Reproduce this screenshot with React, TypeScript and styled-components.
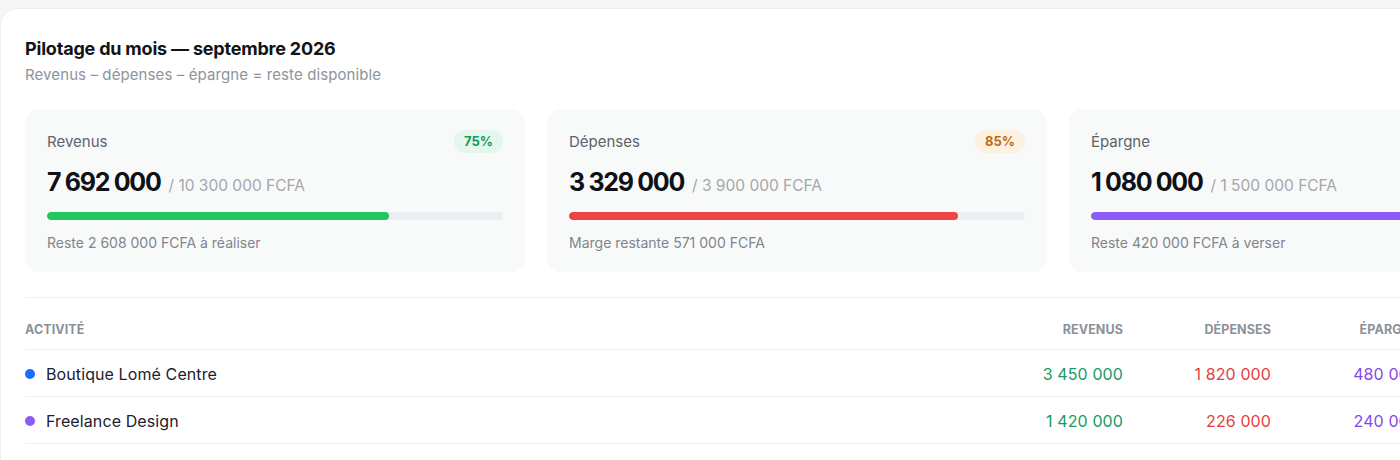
import React from "react";
import styled, { createGlobalStyle } from "styled-components";

const GlobalStyle = createGlobalStyle`
  html, body {
    margin: 0;
    padding: 0;
    background: #f5f7f7;
    overflow: hidden;
  }
  body {
    font-family: Inter, "Noto Sans", sans-serif;
    color: #111827;
    -webkit-font-smoothing: antialiased;
  }
`;

const Page = styled.div`
  padding-top: 8px;
  width: 1600px;
`;

const Panel = styled.section`
  width: 1594px;
  box-sizing: border-box;
  background: #ffffff;
  border: 1px solid #eceff0;
  border-radius: 16px;
  padding: 28px 24px 40px 24px;
`;

const Title = styled.h2`
  margin: 0;
  font-size: 18px;
  font-weight: 700;
  letter-spacing: -0.2px;
  line-height: 24px;
  color: #111318;
`;

const Subtitle = styled.p`
  margin: 4px 0 0 0;
  font-size: 15px;
  line-height: 20px;
  color: #8e939a;
  letter-spacing: 0.1px;
`;

const Cards = styled.div`
  display: grid;
  grid-template-columns: repeat(3, 1fr);
  gap: 22px;
  margin-top: 24px;
`;

const Card = styled.div`
  background: #f8fafa;
  border-radius: 14px;
  padding: 20px 22px 22px 22px;
  height: 163px;
  box-sizing: border-box;
`;

const CardHead = styled.div`
  display: flex;
  justify-content: space-between;
  align-items: center;
  height: 24px;
`;

const Label = styled.span`
  font-size: 15px;
  color: #5d626a;
  letter-spacing: 0;
`;

type Tone = "green" | "orange" | "purple";

const badgeColors: Record<Tone, { bg: string; fg: string }> = {
  green: { bg: "#e5f6ec", fg: "#17995a" },
  orange: { bg: "#fdf1e1", fg: "#c06a12" },
  purple: { bg: "#efe9fd", fg: "#7c4ddb" },
};

const Badge = styled.span<{ $tone: Tone }>`
  display: inline-flex;
  align-items: center;
  justify-content: center;
  height: 23px;
  padding: 0 10px;
  border-radius: 12px;
  font-size: 13px;
  font-weight: 700;
  background: ${(p) => badgeColors[p.$tone].bg};
  color: ${(p) => badgeColors[p.$tone].fg};
`;

const AmountRow = styled.div`
  display: flex;
  align-items: baseline;
  gap: 8px;
  margin-top: 14px;
  height: 34px;
`;

const Amount = styled.span`
  font-size: 25px;
  font-weight: 700;
  letter-spacing: -1.3px;
  color: #0f1115;
`;

const Target = styled.span`
  font-size: 15.5px;
  color: #a3a7ad;
  letter-spacing: 0;
`;

const Track = styled.div`
  margin-top: 11px;
  height: 8px;
  border-radius: 4px;
  background: #eceef2;
  overflow: hidden;
`;

const Fill = styled.div<{ $color: string }>`
  height: 100%;
  border-radius: 4px;
  background: ${(p) => p.$color};
`;

const Note = styled.div`
  margin-top: 14px;
  font-size: 14px;
  color: #80858c;
  letter-spacing: 0;
`;

const Divider = styled.hr`
  border: none;
  border-top: 1px solid #eef0f1;
  margin: 25px 0 0 0;
`;

const Table = styled.div`
  display: grid;
  grid-template-columns: 1fr repeat(3, 148px) 150px;
`;

const HeadCell = styled.div<{ $right?: boolean }>`
  height: 52px;
  box-sizing: border-box;
  padding-bottom: 12px;
  display: flex;
  align-items: flex-end;
  justify-content: ${(p) => (p.$right ? "flex-end" : "flex-start")};
  font-size: 12.5px;
  font-weight: 700;
  color: #8c9199;
  text-transform: uppercase;
  letter-spacing: 0.1px;
  border-bottom: 1px solid #eef0f1;
`;

const Cell = styled.div<{ $right?: boolean; $color?: string }>`
  height: 47px;
  box-sizing: border-box;
  padding-top: 1px;
  display: flex;
  align-items: center;
  justify-content: ${(p) => (p.$right ? "flex-end" : "flex-start")};
  font-size: 16px;
  color: ${(p) => p.$color ?? "#1b2130"};
  letter-spacing: 0.1px;
  border-bottom: 1px solid #eef0f1;
`;

const Dot = styled.span<{ $color: string }>`
  width: 10px;
  height: 10px;
  border-radius: 50%;
  background: ${(p) => p.$color};
  margin: 0 11px 0 0;
`;

const GREEN = "#169b64";
const RED = "#e93c3c";
const PURPLE = "#8347ec";
const SLATE = "#2b3342";

const summary = [
  {
    label: "Revenus",
    amount: "7 692 000",
    target: "/ 10 300 000 FCFA",
    pct: 75,
    fill: 75,
    tone: "green" as Tone,
    color: "#22c55e",
    note: "Reste 2 608 000 FCFA à réaliser",
  },
  {
    label: "Dépenses",
    amount: "3 329 000",
    target: "/ 3 900 000 FCFA",
    pct: 85,
    fill: 85.3,
    tone: "orange" as Tone,
    color: "#ef4444",
    note: "Marge restante 571 000 FCFA",
  },
  {
    label: "Épargne",
    amount: "1 080 000",
    target: "/ 1 500 000 FCFA",
    pct: 72,
    fill: 72,
    tone: "purple" as Tone,
    color: "#8b5cf6",
    note: "Reste 420 000 FCFA à verser",
  },
];

const rows = [
  { name: "Boutique Lomé Centre", dot: "#1a6dff", rev: "3 450 000", dep: "1 820 000", ep: "480 000", rest: "1 150 000" },
  { name: "Freelance Design", dot: "#8b5cf6", rev: "1 420 000", dep: "226 000", ep: "240 000", rest: "954 000" },
];

export default function App() {
  return (
    <>
      <GlobalStyle />
      <Page>
        <Panel>
          <Title>Pilotage du mois — septembre 2026</Title>
          <Subtitle>Revenus – dépenses – épargne = reste disponible</Subtitle>
          <Cards>
            {summary.map((s) => (
              <Card key={s.label}>
                <CardHead>
                  <Label>{s.label}</Label>
                  <Badge $tone={s.tone}>{s.pct}%</Badge>
                </CardHead>
                <AmountRow>
                  <Amount>{s.amount}</Amount>
                  <Target>{s.target}</Target>
                </AmountRow>
                <Track>
                  <Fill $color={s.color} style={{ width: `${s.fill}%` }} />
                </Track>
                <Note>{s.note}</Note>
              </Card>
            ))}
          </Cards>
          <Divider />
          <Table>
            <HeadCell>Activité</HeadCell>
            <HeadCell $right>Revenus</HeadCell>
            <HeadCell $right>Dépenses</HeadCell>
            <HeadCell $right>Épargne</HeadCell>
            <HeadCell $right>Reste</HeadCell>
            {rows.map((r) => (
              <React.Fragment key={r.name}>
                <Cell>
                  <Dot $color={r.dot} />
                  {r.name}
                </Cell>
                <Cell $right $color={GREEN}>{r.rev}</Cell>
                <Cell $right $color={RED}>{r.dep}</Cell>
                <Cell $right $color={PURPLE}>{r.ep}</Cell>
                <Cell $right $color={SLATE}>{r.rest}</Cell>
              </React.Fragment>
            ))}
          </Table>
        </Panel>
      </Page>
    </>
  );
}
